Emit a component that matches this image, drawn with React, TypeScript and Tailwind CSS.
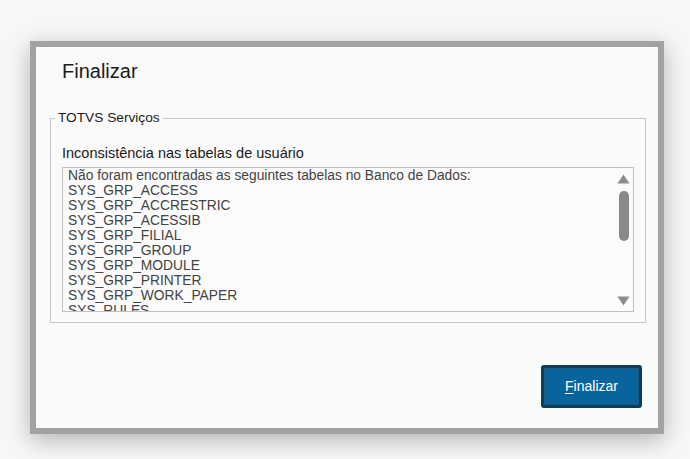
const lines = [
  'Não foram encontradas as seguintes tabelas no Banco de Dados:',
  'SYS_GRP_ACCESS',
  'SYS_GRP_ACCRESTRIC',
  'SYS_GRP_ACESSIB',
  'SYS_GRP_FILIAL',
  'SYS_GRP_GROUP',
  'SYS_GRP_MODULE',
  'SYS_GRP_PRINTER',
  'SYS_GRP_WORK_PAPER',
  'SYS_RULES',
  'SYS_RULES_FEATURES',
]

export default function App() {
  return (
    <div
      className="min-h-screen w-full bg-[#f7f7f7] pt-[41px] pl-[30px]"
      style={{ fontFamily: '"Liberation Sans", Arial, sans-serif' }}
    >
      <div className="w-[634px] h-[393px] border-[6px] border-[#a2a2a2] bg-[#fafafa] shadow-[0_6px_22px_rgba(0,0,0,0.28)] flex flex-col">
        <h1 className="pl-[26px] pt-[12px] text-[20px] leading-[24px] text-[#1a1a1a]">Finalizar</h1>

        <fieldset className="mt-[27px] ml-[14px] mr-[12px] border border-[#c6c6c6] px-[11px] pb-[10px]">
          <legend className="-ml-[7px] px-[3px] text-[13.7px] leading-[16px] text-[#1a1a1a]">TOTVS Serviços</legend>

          <div className="mt-[19px] text-[14.5px] leading-[16px] text-[#1a1a1a]">
            Inconsistência nas tabelas de usuário
          </div>

          <div className="mt-[6px] h-[145px] border border-[#c0c0c0] bg-[#fbfbfb] flex">
            <div className="flex-1 overflow-hidden pl-[5px] text-[13.8px] leading-[15px] text-[#444]">
              {lines.map((l) => (
                <div key={l} className="whitespace-nowrap">{l}</div>
              ))}
            </div>
            <div className="w-[17px] flex flex-col items-center pt-[6px] pb-[5px] mr-[1px]">
              <svg width="13" height="10" viewBox="0 0 13 10">
                <path d="M6.5 0.5 L12.5 9.5 L0.5 9.5 Z" fill="#8c8c8c" />
              </svg>
              <div className="mt-[7px] w-[10px] h-[50px] rounded-full bg-[#8a8a8a]" />
              <div className="flex-1" />
              <svg width="13" height="10" viewBox="0 0 13 10">
                <path d="M0.5 0.5 L12.5 0.5 L6.5 9.5 Z" fill="#8c8c8c" />
              </svg>
            </div>
          </div>
        </fieldset>

        <div className="flex-1" />

        <div className="flex justify-end pr-[16px] pb-[20px]">
          <button className="w-[101px] h-[43px] rounded-[3px] border-[3px] border-[#0d3d5e] bg-[#0a649c] text-white text-[14px] shadow-[inset_0_0_0_1px_#1a5a85]">
            <span className="underline underline-offset-2">F</span>inalizar
          </button>
        </div>
      </div>
    </div>
  )
}
